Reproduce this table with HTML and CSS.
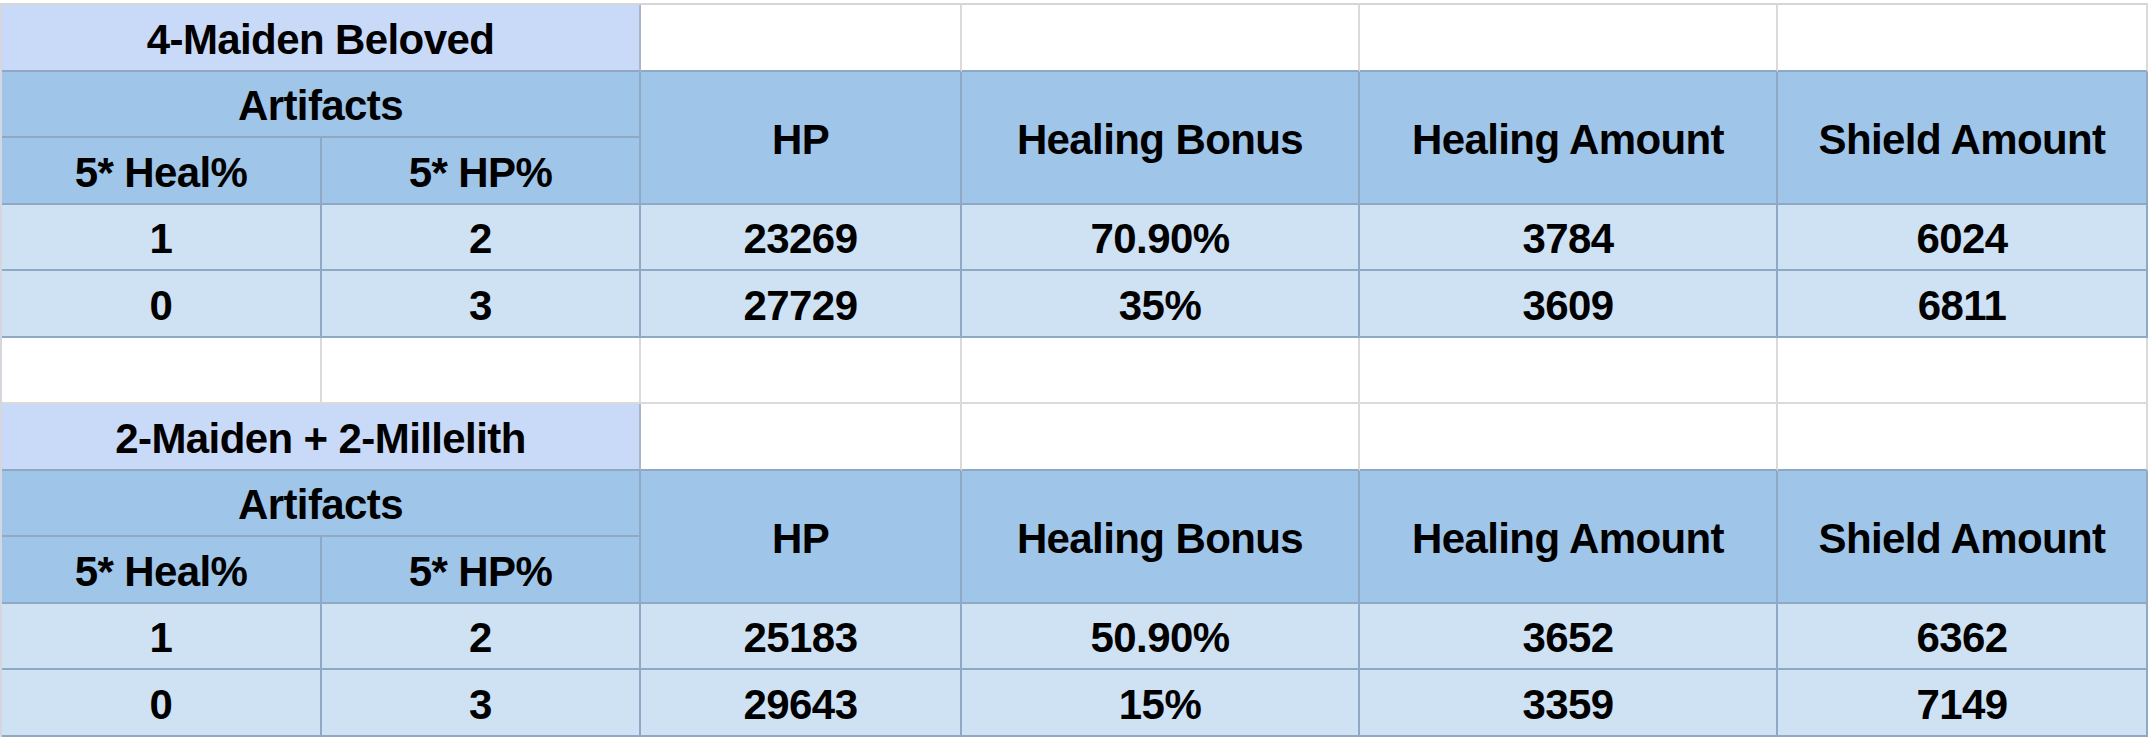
FILE: index.html
```html
<!DOCTYPE html>
<html>
<head>
<meta charset="utf-8">
<link rel="stylesheet" href="styles.css">
</head>
<body>
<div class="sheet">
  <!-- Row 1 -->
  <div class="cell title span2">4-Maiden Beloved</div>
  <div class="cell blank above"></div>
  <div class="cell blank above"></div>
  <div class="cell blank above"></div>
  <div class="cell blank above"></div>
  <!-- Row 2-3 -->
  <div class="cell head span2">Artifacts</div>
  <div class="cell head tall">HP</div>
  <div class="cell head tall">Healing Bonus</div>
  <div class="cell head tall">Healing Amount</div>
  <div class="cell head tall">Shield Amount</div>
  <div class="cell head">5* Heal%</div>
  <div class="cell head">5* HP%</div>
  <!-- Row 4 -->
  <div class="cell data">1</div>
  <div class="cell data">2</div>
  <div class="cell data">23269</div>
  <div class="cell data">70.90%</div>
  <div class="cell data">3784</div>
  <div class="cell data">6024</div>
  <!-- Row 5 -->
  <div class="cell data">0</div>
  <div class="cell data">3</div>
  <div class="cell data">27729</div>
  <div class="cell data">35%</div>
  <div class="cell data">3609</div>
  <div class="cell data">6811</div>
  <!-- Row 6 empty -->
  <div class="cell blank"></div>
  <div class="cell blank"></div>
  <div class="cell blank"></div>
  <div class="cell blank"></div>
  <div class="cell blank"></div>
  <div class="cell blank"></div>
  <!-- Row 7 -->
  <div class="cell title span2">2-Maiden + 2-Millelith</div>
  <div class="cell blank above"></div>
  <div class="cell blank above"></div>
  <div class="cell blank above"></div>
  <div class="cell blank above"></div>
  <!-- Row 8-9 -->
  <div class="cell head span2">Artifacts</div>
  <div class="cell head tall">HP</div>
  <div class="cell head tall">Healing Bonus</div>
  <div class="cell head tall">Healing Amount</div>
  <div class="cell head tall">Shield Amount</div>
  <div class="cell head">5* Heal%</div>
  <div class="cell head">5* HP%</div>
  <!-- Row 10 -->
  <div class="cell data">1</div>
  <div class="cell data">2</div>
  <div class="cell data">25183</div>
  <div class="cell data">50.90%</div>
  <div class="cell data">3652</div>
  <div class="cell data">6362</div>
  <!-- Row 11 -->
  <div class="cell data">0</div>
  <div class="cell data">3</div>
  <div class="cell data">29643</div>
  <div class="cell data">15%</div>
  <div class="cell data">3359</div>
  <div class="cell data">7149</div>
</div>
</body>
</html>
```
FILE: styles.css
```css
html, body {
  margin: 0;
  padding: 0;
  background: #ffffff;
}

body {
  width: 2148px;
  height: 740px;
  overflow: hidden;
}

.sheet {
  margin-top: 3px;
  border-top: 2px solid #d6d6d6;
  border-left: 2px solid #d4d8de;
  display: grid;
  grid-template-columns: 320px 319px 321px 398px 418px 1fr;
  grid-auto-rows: 66.5px;
  font-family: "Liberation Sans", Arial, sans-serif;
  font-weight: bold;
  font-size: 42px;
  letter-spacing: -0.6px;
  color: #000000;
}

.cell {
  box-sizing: border-box;
  display: flex;
  align-items: center;
  justify-content: center;
  border-right: 2px solid #8fa8c3;
  border-bottom: 2px solid #8fa8c3;
  white-space: nowrap;
  padding-top: 5px;
}

.span2 {
  grid-column: span 2;
}

.tall {
  grid-row: span 2;
}

.title {
  background: #c9daf8;
  border-right-color: #aab6c8;
}

.head {
  background: #9fc5e8;
}

.data {
  background: #cfe2f3;
}

.blank {
  background: #ffffff;
  border-right-color: #dadada;
  border-bottom-color: #dadada;
}

.blank.above {
  border-bottom-color: #8fa8c3;
}
```
